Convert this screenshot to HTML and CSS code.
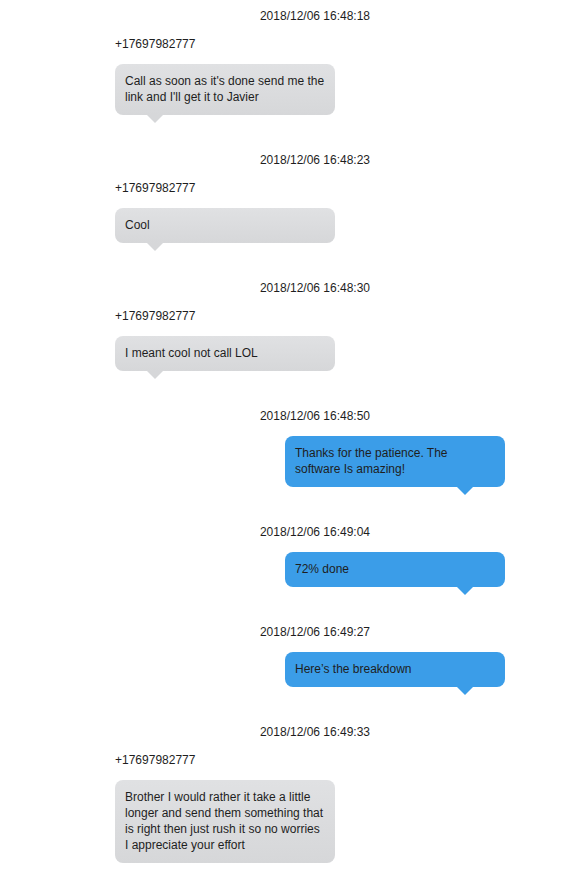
FILE: index.html
```html
<!DOCTYPE html>
<html>
<head>
<meta charset="utf-8">
<link rel="stylesheet" href="styles.css">
</head>
<body>
<div class="chat">
  <div class="msg in">
    <div class="time">2018/12/06 16:48:18</div>
    <div class="sender">+17697982777</div>
    <div class="bubble">Call as soon as it's done send me the link and I'll get it to Javier</div>
  </div>
  <div class="msg in">
    <div class="time">2018/12/06 16:48:23</div>
    <div class="sender">+17697982777</div>
    <div class="bubble">Cool</div>
  </div>
  <div class="msg in">
    <div class="time">2018/12/06 16:48:30</div>
    <div class="sender">+17697982777</div>
    <div class="bubble">I meant cool not call LOL</div>
  </div>
  <div class="msg out">
    <div class="time">2018/12/06 16:48:50</div>
    <div class="bubble">Thanks for the patience. The software Is amazing!</div>
  </div>
  <div class="msg out">
    <div class="time">2018/12/06 16:49:04</div>
    <div class="bubble">72% done</div>
  </div>
  <div class="msg out">
    <div class="time">2018/12/06 16:49:27</div>
    <div class="bubble">Here’s the breakdown</div>
  </div>
  <div class="msg in">
    <div class="time">2018/12/06 16:49:33</div>
    <div class="sender">+17697982777</div>
    <div class="bubble">Brother I would rather it take a little longer and send them something that is right then just rush it so no worries I appreciate your effort</div>
  </div>
</div>
</body>
</html>
```
FILE: styles.css
```css
html, body {
  margin: 0;
  padding: 0;
  background: #ffffff;
}
body {
  font-family: "Liberation Sans", Arial, Helvetica, sans-serif;
  font-size: 12px;
  color: #1e1e1e;
}
.chat {
  width: 400px;
  margin-left: 115px;
  padding-top: 7.5px;
  display: flex;
  flex-direction: column;
  gap: 37px;
}
.msg {
  display: flex;
  flex-direction: column;
}
.time {
  line-height: 16px;
  text-align: center;
  margin-bottom: 12px;
}
.sender {
  line-height: 16px;
  margin-bottom: 12px;
}
.bubble {
  position: relative;
  width: 200px;
  padding: 9.5px 10px;
  line-height: 16px;
  border-radius: 8px;
}
.in .bubble {
  align-self: flex-start;
  background: linear-gradient(#e0e1e3, #d6d7d9);
}
.out .bubble {
  align-self: flex-end;
  margin-right: 10px;
  background: #3b9de8;
}
.bubble::after {
  content: "";
  position: absolute;
  top: 100%;
  width: 0;
  height: 0;
  border-left: 8px solid transparent;
  border-right: 8px solid transparent;
  border-top: 8px solid #d6d7d9;
}
.in .bubble::after {
  left: 32px;
}
.out .bubble::after {
  right: 32px;
  border-top-color: #3b9de8;
}
```
